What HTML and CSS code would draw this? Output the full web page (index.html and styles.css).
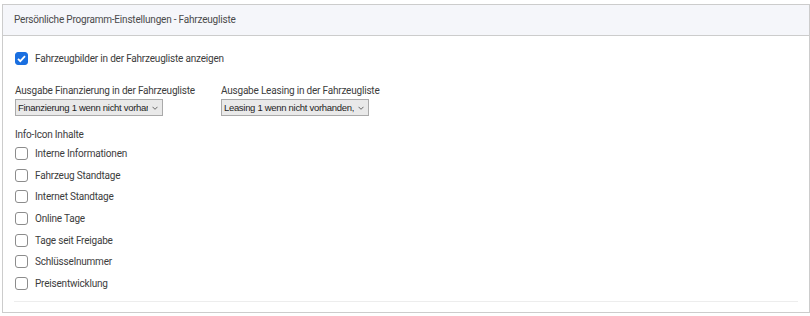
FILE: index.html
```html
<!DOCTYPE html>
<html lang="de">
<head>
  <meta charset="UTF-8" />
  <title>Fahrzeugliste Einstellungen</title>
  <link rel="stylesheet" href="styles.css">
</head>
<body>
  <div class="panel">
    <div class="panel-head">Persönliche Programm-Einstellungen - Fahrzeugliste</div>
    <div class="panel-body">
      <label class="check main-check">
        <input type="checkbox" checked />
        <span>Fahrzeugbilder in der Fahrzeugliste anzeigen</span>
      </label>

      <div class="selects">
        <div class="field">
          <div class="field-label">Ausgabe Finanzierung in der Fahrzeugliste</div>
          <select>
            <option>Finanzierung 1 wenn nicht vorhanden, dann 2</option>
          </select>
        </div>
        <div class="field">
          <div class="field-label">Ausgabe Leasing in der Fahrzeugliste</div>
          <select>
            <option>Leasing 1 wenn nicht vorhanden, dann 2</option>
          </select>
        </div>
      </div>

      <div class="field-label info-title">Info-Icon Inhalte</div>
      <div class="check-list">
        <label class="check"><input type="checkbox" /><span>Interne Informationen</span></label>
        <label class="check"><input type="checkbox" /><span>Fahrzeug Standtage</span></label>
        <label class="check"><input type="checkbox" /><span>Internet Standtage</span></label>
        <label class="check"><input type="checkbox" /><span>Online Tage</span></label>
        <label class="check"><input type="checkbox" /><span>Tage seit Freigabe</span></label>
        <label class="check"><input type="checkbox" /><span>Schlüsselnummer</span></label>
        <label class="check"><input type="checkbox" /><span>Preisentwicklung</span></label>
      </div>
      <hr class="divider" />
    </div>
  </div>
</body>
</html>
```

FILE: styles.css
```css
body {
  margin: 0;
  padding: 4px 0 0 2px;
  font-family: Roboto, 'Noto Sans', sans-serif;
  font-size: 10px;
  letter-spacing: -0.2px;
  color: #3c3c3c;
  background: #ffffff;
}

.panel {
  border: 1px solid #cccccc;
  height: 309px;
  box-sizing: border-box;
}

.panel-head {
  height: 30px;
  line-height: 30px;
  padding-left: 11px;
  background: #f5f6fa;
  border-bottom: 1px solid #cccccc;
  color: #4a4a4a;
}

.panel-body {
  padding: 16px 12px 0 12px;
}

.check {
  display: flex;
  align-items: center;
  gap: 7px;
  height: 13px;
}

.check input {
  appearance: none;
  margin: 0;
  width: 13px;
  height: 13px;
  border: 1px solid #8c8c8c;
  border-radius: 3px;
  background: #ffffff;
  flex-shrink: 0;
}

.check input:checked {
  border-color: #1a6fe0;
  background: #1a6fe0 url("data:image/svg+xml,%3Csvg xmlns='http://www.w3.org/2000/svg' viewBox='0 0 13 13'%3E%3Cpath d='M3 6.8l2.3 2.3L10 4.2' fill='none' stroke='white' stroke-width='1.8'/%3E%3C/svg%3E") center/13px 13px no-repeat;
}

.selects {
  display: flex;
  gap: 26px;
  margin-top: 19px;
}

.field-label {
  line-height: 14px;
}

.field select {
  margin-top: 1px;
}

select {
  appearance: none;
  display: block;
  width: 148px;
  height: 17px;
  padding: 0 14px 0 2px;
  font-family: 'Liberation Sans', Arial, sans-serif;
  font-size: 9.5px;
  letter-spacing: -0.3px;
  color: #1e1e1e;
  background: #e9e9e9 url("data:image/svg+xml,%3Csvg xmlns='http://www.w3.org/2000/svg' viewBox='0 0 6 4'%3E%3Cpath d='M0.5 0.8l2.5 2.5 2.5-2.5' fill='none' stroke='%23666' stroke-width='1'/%3E%3C/svg%3E") right 4px center/6px 4px no-repeat;
  border: 1px solid #aaaaaa;
  border-radius: 0;
  white-space: nowrap;
  overflow: hidden;
}

.info-title {
  margin-top: 12px;
  margin-bottom: 5px;
}

.check-list {
  display: flex;
  flex-direction: column;
  gap: 8.7px;
}

.divider {
  margin: 11px -1px 0 -1px;
  border: 0;
  border-top: 1px solid #ededed;
}
```
